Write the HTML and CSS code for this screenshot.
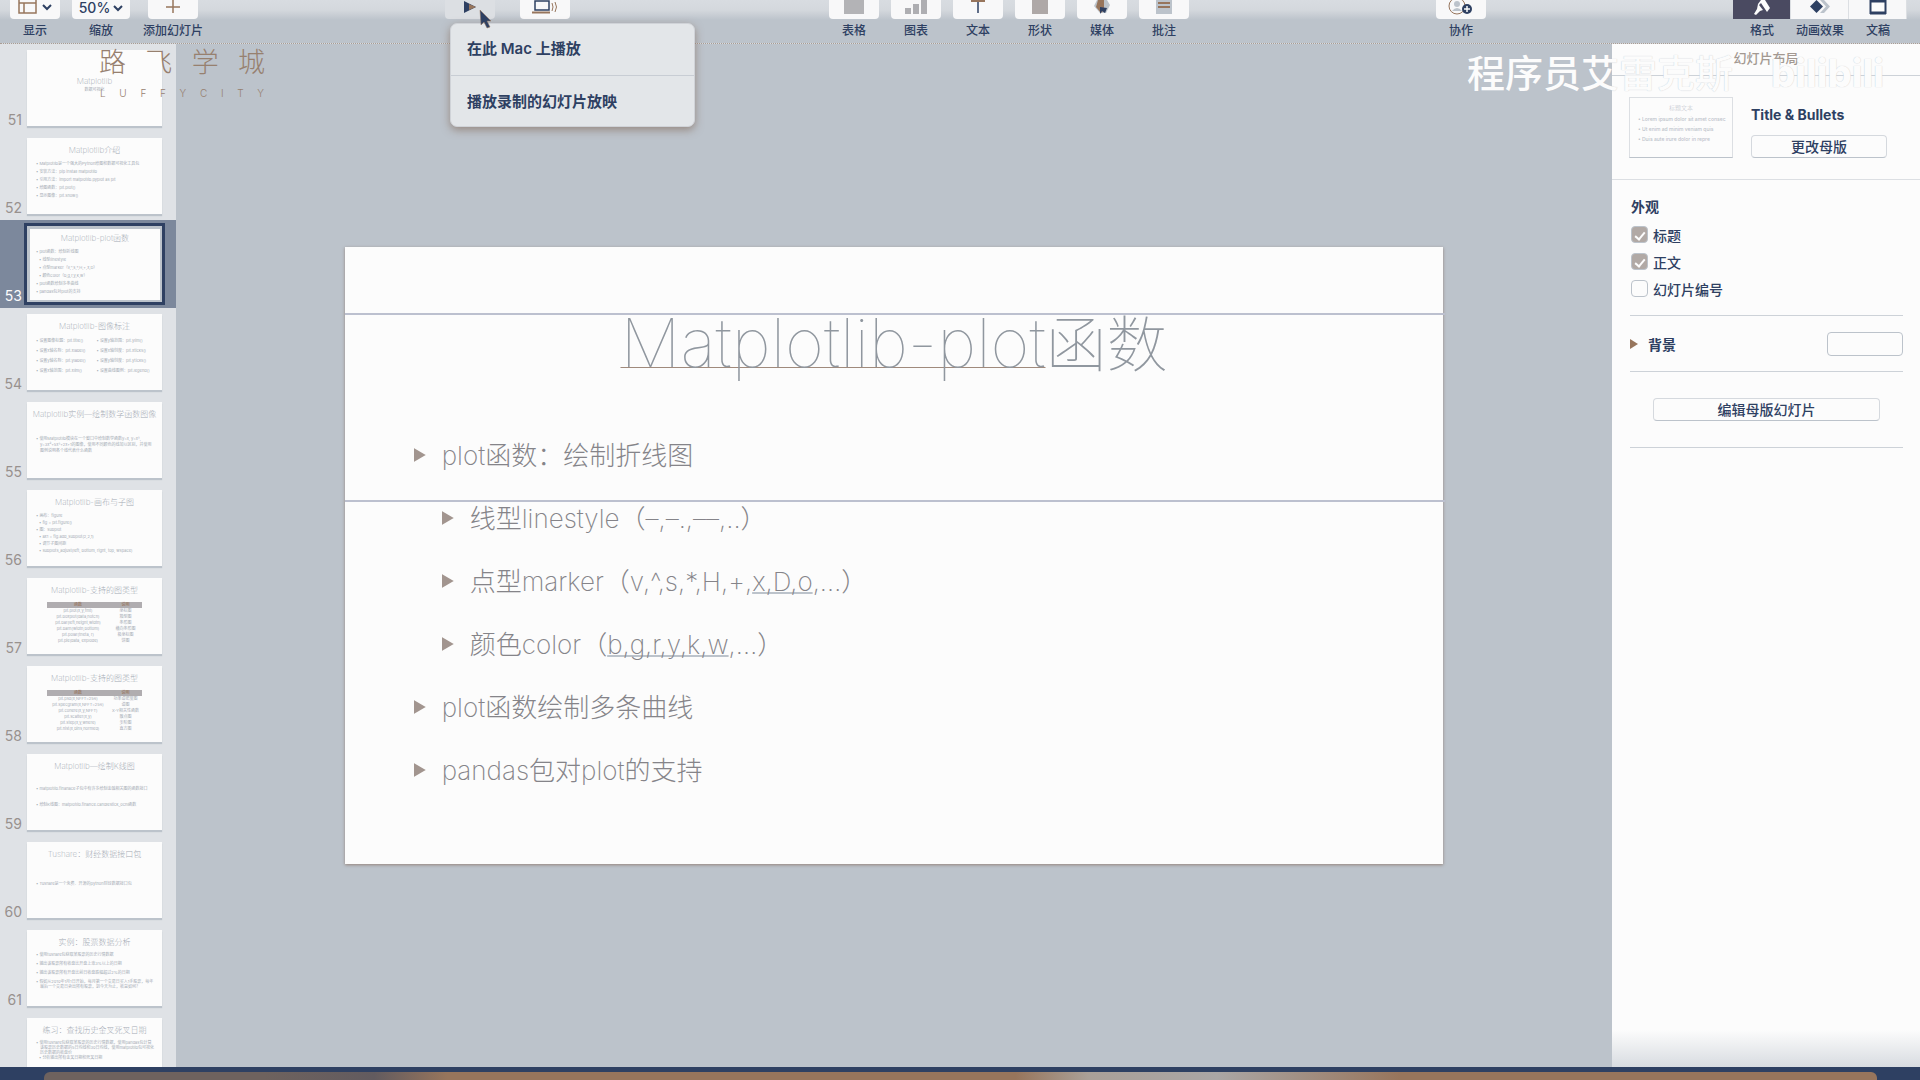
FILE: index.html
```html
<!DOCTYPE html>
<html lang="zh-CN">
<head>
<meta charset="utf-8">
<title>Matplotlib-plot函数</title>
<link rel="stylesheet" href="styles.css">
</head>
<body>
<div class="app">
  <header class="toolbar">
    <div class="group left">
      <div class="tool"><button aria-label="显示"><svg width="36" height="18" viewBox="0 0 36 18"><path d="M2 -2h17v15H2zM2 3h17M7 3v10" fill="none" stroke="#97755c" stroke-width="1.500"/><path d="M26 5l4 4 4-4" fill="none" stroke="#2e4062" stroke-width="2"/></svg></button><span>显示</span></div>
      <div class="tool wide"><button class="zoom">50%<svg width="10" height="8" viewBox="0 0 10 8"><path d="M1 2l4 4 4-4" fill="none" stroke="#2e4062" stroke-width="2"/></svg></button><span>缩放</span></div>
      <div class="tool"><button aria-label="添加幻灯片"><svg width="20" height="18" viewBox="0 0 20 18"><path d="M3 7h14M10 0v13" stroke="#97755c" stroke-width="1.500" fill="none"/></svg></button><span>添加幻灯片</span></div>
    </div>
    <div class="group play">
      <div class="tool"><button class="pressed" aria-label="播放"><svg width="20" height="18" viewBox="0 0 20 18"><path d="M4 1l12 6L4 13z" fill="#2e4062"/><path d="M9 4l7 3-7 3z" fill="#97755c"/></svg></button></div>
      <div class="tool"><button aria-label="Keynote Live"><svg width="28" height="18" viewBox="0 0 28 18"><rect x="4" y="1" width="14" height="9" fill="none" stroke="#2e4062" stroke-width="1.500"/><path d="M1 12.500h18" stroke="#97755c" stroke-width="2"/><path d="M21 3q2 4 0 8M24 2q3 5 0 10" fill="none" stroke="#97755c"/></svg></button></div>
    </div>
    <div class="group insert">
      <div class="tool"><button aria-label="表格"><svg width="22" height="18" viewBox="0 0 22 18"><path d="M1 0h20v14H1z" fill="#b3b3b6"/></svg></button><span>表格</span></div>
      <div class="tool"><button aria-label="图表"><svg width="24" height="18" viewBox="0 0 24 18"><path d="M1 8h6v6H1zM9 4h6v10H9zM17 0h6v14h-6z" fill="#aeaeb2"/></svg></button><span>图表</span></div>
      <div class="tool"><button aria-label="文本"><svg width="20" height="18" viewBox="0 0 20 18"><path d="M3 0h14v2H3z" fill="#97755c"/><path d="M10 2v11" stroke="#2e4062" stroke-width="1.500"/></svg></button><span>文本</span></div>
      <div class="tool"><button aria-label="形状"><svg width="20" height="18" viewBox="0 0 20 18"><path d="M2 0h16v14H2z" fill="#aea8a7"/></svg></button><span>形状</span></div>
      <div class="tool"><button aria-label="媒体"><svg width="20" height="18" viewBox="0 0 20 18"><path d="M5 0h10l3 5-4 8H8L2 6z" fill="#bcc3cb"/><path d="M6 0h6v10l-3 3-5-6z" fill="#97755c"/><path d="M8 7l7 1-2 5-3-2-2 3z" fill="#2e4062"/></svg></button><span>媒体</span></div>
      <div class="tool"><button aria-label="批注"><svg width="20" height="18" viewBox="0 0 20 18"><path d="M2 0h16v14H2z" fill="#bcc3cb"/><path d="M4 3h12M4 7h12" stroke="#97755c" stroke-width="2"/></svg></button><span>批注</span></div>
    </div>
    <div class="group">
      <div class="tool"><button aria-label="协作"><svg width="26" height="18" viewBox="0 0 26 18"><circle cx="9" cy="6" r="8" fill="none" stroke="#97755c"/><circle cx="9" cy="4" r="3" fill="#bcc3cb"/><path d="M4 11q5-6 10 0z" fill="#bcc3cb"/><circle cx="19" cy="9" r="5" fill="#2e4062"/><path d="M19 6v6M16 9h6" stroke="#fcfcfc" stroke-width="1.500"/></svg></button><span>协作</span></div>
    </div>
    <div class="group panes">
      <div class="tool"><button class="active" aria-label="格式"><svg width="22" height="18" viewBox="0 0 22 18"><path d="M10 0h4l5 8-3 4-6-9-2 2 4 5-3 1-4 4-2-1 3-5 1-5z" fill="#fcfcfc"/></svg></button><span>格式</span></div>
      <div class="tool"><button aria-label="动画效果"><svg width="24" height="18" viewBox="0 0 24 18"><path d="M12 0h4l6 6.500-6 6.500h-4l6-6.500z" fill="#bcc3cb"/><path d="M8.500 0l6.500 6.500L8.500 13 2 6.500z" fill="#2e4062"/></svg></button><span>动画效果</span></div>
      <div class="tool"><button aria-label="文稿"><svg width="20" height="18" viewBox="0 0 20 18"><path d="M2.500 0h15v13h-15z" fill="#fcfcfc" stroke="#2e4062" stroke-width="2"/><path d="M2 13h16M2 1h16" stroke="#2e4062" stroke-width="3"/></svg></button><span>文稿</span></div>
    </div>
  </header>

  <div class="menu">
    <button>在此 Mac 上播放</button>
    <hr>
    <button>播放录制的幻灯片放映</button>
  </div>
  <svg class="cursor" width="14" height="20" viewBox="0 0 14 20"><path d="M1 1l11 11H8l3 6-3 1-3-6-3 3z" fill="#2e4062" stroke="#97755c" stroke-width="0.500"/></svg>

  <main class="main">
    <nav class="navigator">
      <div class="item"><span class="num">51</span><div class="thumb cover"><h4>Matplotlib</h4><p>数据可视化</p></div></div>
      <div class="item"><span class="num">52</span><div class="thumb"><h4>Matplotlib介绍</h4><ul><li>Matplotlib是一个强大的Python绘图和数据可视化工具包</li><li>安装方法：pip install matplotlib</li><li>引用方法：import matplotlib.pyplot as plt</li><li>绘图函数：plt.plot()</li><li>显示图像：plt.show()</li></ul></div></div>
      <div class="item selected"><span class="num">53</span><div class="thumb"><h4>Matplotlib-plot函数</h4><ul><li>plot函数：绘制折线图</li><li class="sub">线型linestyle</li><li class="sub">点型marker（v,^,s,*,H,+,x,D）</li><li class="sub">颜色color（b,g,r,y,k,w）</li><li>plot函数绘制多条曲线</li><li>pandas包对plot的支持</li></ul></div></div>
      <div class="item"><span class="num">54</span><div class="thumb"><h4>Matplotlib-图像标注</h4><ul class="cols"><li>设置图像标题：plt.title()</li><li>设置x轴名称：plt.xlabel()</li><li>设置y轴名称：plt.ylabel()</li><li>设置x轴范围：plt.xlim()</li><li>设置y轴范围：plt.ylim()</li><li>设置x轴刻度：plt.xticks()</li><li>设置y轴刻度：plt.yticks()</li><li>设置曲线图例：plt.legend()</li></ul></div></div>
      <div class="item"><span class="num">55</span><div class="thumb low"><h4>Matplotlib实例—绘制数学函数图像</h4><ul class="para"><li>使用Matplotlib模块在一个窗口中绘制数学函数y=x, y=x², y=3x³+5x²+2x+1的图像，使用不同颜色的线加以区别，并使用图例说明各个线代表什么函数</li></ul></div></div>
      <div class="item"><span class="num">56</span><div class="thumb"><h4>Matplotlib-画布与子图</h4><ul class="mid"><li>画布：figure</li><li class="sub">fig = plt.figure()</li><li>图：subplot</li><li class="sub">ax1 = fig.add_subplot(2,2,1)</li><li class="sub">调节子图间距</li><li class="sub">subplots_adjust(left, bottom, right, top, wspace)</li></ul></div></div>
      <div class="item"><span class="num">57</span><div class="thumb"><h4>Matplotlib-支持的图类型</h4><table><tr><th>函数</th><th>说明</th></tr><tr><td>plt.plot(x,y,fmt)</td><td>坐标图</td></tr><tr><td>plt.boxplot(data,notch)</td><td>箱型图</td></tr><tr><td>plt.bar(left,height,width)</td><td>条形图</td></tr><tr><td>plt.barh(width,bottom)</td><td>横向条形图</td></tr><tr><td>plt.polar(theta, r)</td><td>极坐标图</td></tr><tr><td>plt.pie(data, explode)</td><td>饼图</td></tr></table></div></div>
      <div class="item"><span class="num">58</span><div class="thumb"><h4>Matplotlib-支持的图类型</h4><table><tr><th>函数</th><th>说明</th></tr><tr><td>plt.psd(x,NFFT=256)</td><td>功率谱密度图</td></tr><tr><td>plt.specgram(x,NFFT=256)</td><td>谱图</td></tr><tr><td>plt.cohere(x,y,NFFT)</td><td>X-Y相关性函数</td></tr><tr><td>plt.scatter(x,y)</td><td>散点图</td></tr><tr><td>plt.step(x,y,where)</td><td>步阶图</td></tr><tr><td>plt.hist(x,bins,normed)</td><td>直方图</td></tr></table></div></div>
      <div class="item"><span class="num">59</span><div class="thumb"><h4>Matplotlib—绘制K线图</h4><ul class="loose"><li>matplotlib.finanace子包中有许多绘制金融相关图的函数接口</li><li>绘制K线图：matplotlib.finance.candlestick_ochl函数</li></ul></div></div>
      <div class="item"><span class="num">60</span><div class="thumb"><h4>Tushare：财经数据接口包</h4><ul class="single"><li>Tushare是一个免费、开源的python财经数据接口包</li></ul></div></div>
      <div class="item"><span class="num">61</span><div class="thumb"><h4>实例：股票数据分析</h4><ul class="nine"><li>使用tushare包获取某股票的历史行情数据</li><li>输出该股票所有收盘比开盘上涨3%以上的日期</li><li>输出该股票所有开盘比前日收盘跌幅超过2%的日期</li><li>假如从2010年1月1日开始，每月第一个交易日买入1手股票，每年最后一个交易日卖出所有股票，到今天为止，收益如何？</li></ul></div></div>
      <div class="item"><span class="num"></span><div class="thumb"><h4>练习：查找历史金叉死叉日期</h4><ul class="tight"><li>使用tushare包获取某股票的历史行情数据，使用pandas包计算该股票历史数据的5日均线和30日均线，使用matplotlib包可视化历史数据的收盘价</li><li class="sub">分析输出所有金叉日期和死叉日期</li></ul></div></div>
    </nav>

    <section class="canvas">
      <article class="slide">
        <h1><u>Matplotlib-plot</u>函数</h1>
        <ul>
          <li>plot函数：绘制折线图</li>
          <li class="sub">线型linestyle（–,–.,––,..）</li>
          <li class="sub">点型marker（v,^,s,*,H,+,<u>x,D,o</u>,…）</li>
          <li class="sub">颜色color（<u>b,g,r,y,k,w</u>,…）</li>
          <li>plot函数绘制多条曲线</li>
          <li>pandas包对plot的支持</li>
        </ul>
        <i class="guide upper"></i>
        <i class="guide lower"></i>
      </article>
    </section>

    <aside class="inspector">
      <h2>幻灯片布局</h2>
      <div class="master">
        <div class="preview"><h5>标题文本</h5><p>• Lorem ipsum dolor sit amet consec</p><p>• Ut enim ad minim veniam quis</p><p>• Duis aute irure dolor in repre</p></div>
        <div class="master-info"><strong>Title &amp; Bullets</strong><button>更改母版</button></div>
      </div>
      <div class="options">
        <h3>外观</h3>
        <label><input type="checkbox" checked>标题</label>
        <label><input type="checkbox" checked>正文</label>
        <label><input type="checkbox">幻灯片编号</label>
      </div>
      <div class="background"><svg width="8" height="10" viewBox="0 0 8 10"><path d="M0 0l8 5-8 5z" fill="#97755c"/></svg><span>背景</span><button class="well" aria-label="背景颜色"></button></div>
      <div class="edit"><button>编辑母版幻灯片</button></div>
      <div class="fade"></div>
    </aside>
  </main>
  <footer class="dock"><div></div></footer>

  <div class="brand">
    <div class="cn"><span>路</span><span>飞</span><span>学</span><span>城</span></div>
    <div class="en"><span>L</span><span>U</span><span>F</span><span>F</span><span>Y</span><span>C</span><span>I</span><span>T</span><span>Y</span></div>
  </div>
  <div class="author"><span>程序员艾雷克斯</span><b>bilibili</b></div>
</div>
</body>
</html>
```
FILE: styles.css
```css
* { box-sizing: border-box; margin: 0; padding: 0; }
body { font-family: Inter, "Noto Sans CJK SC", sans-serif; color: #2e4062; background: #bcc3cb; }
button { font: inherit; color: inherit; border: 0; background: none; }
ul { list-style: none; }
.app { position: relative; display: flex; flex-direction: column; height: 100vh; overflow: hidden; }

/* toolbar */
.toolbar { display: flex; justify-content: space-between; flex: none; height: 44px; padding: 0 13px 0 10px; background: linear-gradient(#d8dce1, #d4d8dd 10px, #bcc3cb 20px); border-bottom: 1px dotted #a99c93; }
.group { display: flex; gap: 12px; }
.play { gap: 25px; }
.insert { gap: 12px; margin-left: 12px; }
.tool { display: flex; flex-direction: column; align-items: center; gap: 3px; width: 50px; font-size: 12px; line-height: 18px; font-weight: 500; white-space: nowrap; }
.tool.wide { width: 58px; margin-right: 6px; }
.tool > span { flex: none; }
.tool button { display: flex; justify-content: center; align-items: flex-start; width: 100%; height: 19px; background: #f8f8f9; border-radius: 0 0 4px 4px; }
.tool .pressed { background: #dcdfe3; }
.tool .zoom { align-items: center; gap: 3px; padding-bottom: 4px; font-size: 14px; line-height: 14px; }
.panes { gap: 0; }
.panes .tool { width: 58px; }
.panes button { border-radius: 0; border-right: 1px solid #dcdfe3; }
.panes .active { background: #4a4a61; }

/* play menu */
.menu { position: absolute; z-index: 3; left: 450px; top: 23px; width: 245px; padding: 7px 0 6px; border-radius: 7px; background: #e3e6e9; border: 1px solid #d0d3d8; box-shadow: 0 3px 8px rgba(120, 90, 70, .55); }
.menu button { display: block; width: 100%; padding: 0 16px; text-align: left; font-size: 15px; line-height: 36px; font-weight: 600; }
.menu hr { border: 0; height: 1px; margin: 8px 0; background: #c8cdd4; }
.cursor { position: absolute; z-index: 4; left: 479px; top: 9px; }

.main { display: flex; flex: 1; min-height: 0; }

/* slide navigator */
.navigator { flex: none; width: 176px; overflow: hidden; background: #dfe2e6; }
.item { display: flex; align-items: flex-end; height: 88px; padding: 6px 14px 6px 0; }
.num { width: 27px; padding-right: 5px; text-align: right; font-size: 14px; line-height: 12px; color: #98918e; }
.thumb { width: 135px; height: 76px; overflow: hidden; padding: 5px 8px; background: #fcfcfc; box-shadow: 0 2px 1px #bcc3cb; color: #a4abb4; }
.thumb h4 { margin: 0 -8px 3px; text-align: center; font-size: 8px; line-height: 14px; font-weight: 200; white-space: nowrap; }
.thumb li { padding-left: 5px; font-size: 4px; line-height: 8px; text-indent: -4px; }
.thumb li::before { content: "• "; }
.thumb .sub { padding-left: 8px; }
.thumb .cols { columns: 2; column-gap: 2px; white-space: nowrap; }
.thumb .cols li { line-height: 10px; }
.thumb .tight li { line-height: 5px; }
.thumb .para { padding-top: 12px; }
.thumb .para li { line-height: 6px; }
.thumb .mid li { line-height: 7px; }
.thumb .loose { padding-top: 5px; }
.thumb .loose li { line-height: 16px; white-space: nowrap; }
.thumb .single { padding-top: 16px; }
.thumb .nine li { line-height: 5px; padding-bottom: 4px; }
.cover { text-align: center; padding-top: 26px; }
.cover h4 { margin-bottom: 0; line-height: 10px; }
.cover p { font-size: 4px; line-height: 8px; }
.thumb table { width: 95px; margin: 5px auto 0; border-collapse: collapse; text-align: center; font-size: 4px; line-height: 6px; white-space: nowrap; }
.thumb th { background: #b0adb0; color: #97755c; font-weight: 500; }
.thumb th:first-child { width: 62px; }
.selected { background: #7c889c; }
.selected .num { color: #fcfcfc; }
.selected .thumb { outline: 3px solid #2e4062; border: solid #bcc3cb; border-width: 3px 2px 2px 3px; padding: 2px 5px; box-shadow: none; }

/* slide */
.canvas { display: flex; flex: 1; align-items: center; justify-content: center; min-width: 0; }
.slide { position: relative; width: 76.5%; aspect-ratio: 16 / 9; padding-top: 48px; background: #fcfcfc; box-shadow: 0 1px 3px rgba(120, 90, 70, .6); color: #858489; font-feature-settings: "calt" 0; }
.slide h1 { height: 129px; text-align: center; font-size: 61px; line-height: 96px; font-weight: 100; color: #90979f; }
.slide h1 u { font-size: 67px; text-decoration: underline; text-decoration-color: #a08a7c; text-decoration-thickness: 1px; text-underline-offset: 0; text-decoration-skip-ink: none; }
.slide li { display: flex; align-items: center; padding-left: 69px; font-size: 26px; line-height: 63px; font-weight: 200; white-space: pre; }
.slide li::before { content: ""; width: 12px; height: 14px; margin-right: 16px; background: #a2958f; clip-path: polygon(0 0, 100% 50%, 0 100%); }
.slide .sub { padding-left: 97px; }
.slide li u { text-decoration-color: #bcc3cb; text-decoration-thickness: 2px; text-underline-offset: 1px; text-decoration-skip-ink: none; }
.guide { position: absolute; left: 0; right: -2px; height: 2px; background: #bcc0cf; }
.upper { top: 66px; }
.lower { top: 253px; }

/* inspector */
.inspector { display: flex; flex-direction: column; flex: none; width: 308px; background: #fcfcfc; font-size: 14px; font-weight: 500; }
.inspector h2 { height: 32px; text-align: center; font-size: 13px; line-height: 28px; font-weight: 500; color: #a39992; border-bottom: 1px solid #cdd2d8; }
.master { display: flex; gap: 18px; height: 104px; padding: 21px 17px; border-bottom: 1px solid #dcdfe3; }
.preview { width: 104px; height: 61px; padding: 4px 8px; border: 1px solid #dcdfe3; border-bottom-color: #bcc3cb; color: #bcc3cb; font-size: 5px; line-height: 10px; white-space: nowrap; overflow: hidden; }
.preview h5 { text-align: center; font-size: 6px; line-height: 12px; font-weight: 300; }
.master-info { display: flex; flex-direction: column; gap: 10px; padding-top: 8px; width: 136px; }
.master-info strong { font-size: 14px; line-height: 20px; font-weight: 700; }
.master-info button, .edit button { width: 100%; border: 1px solid #d5d9de; border-bottom-color: #bcc3cb; border-radius: 4px; line-height: 21px; }
.options { display: flex; flex-direction: column; margin: 0 17px 0 18px; padding: 13px 0 13px 1px; border-bottom: 1px solid #cdd2d8; }
.options h3 { font-size: 14px; line-height: 28px; font-weight: 600; }
.options label { display: flex; align-items: center; gap: 5px; height: 27px; }
.options input { appearance: none; display: grid; place-items: center; width: 17px; height: 17px; border: 1px solid #bcc3cb; border-radius: 4px; }
.options input:checked { background: #b1a9a5; }
.options input:checked::after { content: ""; width: 4px; height: 8px; border: solid #fcfcfc; border-width: 0 2px 2px 0; transform: rotate(40deg); }
.background { display: flex; align-items: center; gap: 10px; height: 56px; margin: 0 17px 0 18px; border-bottom: 1px solid #cdd2d8; font-weight: 600; }
.well { width: 76px; height: 24px; margin-left: auto; border: 1px solid #bcc3cb; border-radius: 4px; }
.edit { height: 76px; margin: 0 17px 0 18px; padding: 26px 23px; border-bottom: 1px solid #cdd2d8; }
.fade { height: 37px; margin-top: auto; background: linear-gradient(#fcfcfc, #d8dce1); }

/* strip under the window */
.dock { flex: none; height: 13px; padding: 5px 43px 0 44px; background: #2e4062; }
.dock div { height: 8px; border-radius: 6px 6px 0 0; background: linear-gradient(90deg, #6e625e 0, #6e625e 12%, #625b5f 18%, #97755c 22%, #97755c 53%, #aaa098 57%, #aaa6a5 64%, #97755c 74%); }

/* overlaid marks */
.brand { position: absolute; z-index: 2; left: 99px; top: 47px; width: 166px; color: #97806f; }
.brand div { display: flex; justify-content: space-between; }
.cn { font-size: 27px; line-height: 32px; font-weight: 200; }
.en { padding: 8px 1px 0; font-size: 10px; line-height: 12px; font-weight: 300; }
.author { position: absolute; z-index: 2; right: 36px; top: 44px; display: flex; align-items: center; gap: 38px; color: #fcfcfc; text-shadow: 0 0 1px #bcc3cb; white-space: nowrap; }
.author span { font-size: 38px; line-height: 58px; font-weight: 500; }
.author b { font-size: 38px; line-height: 40px; font-weight: 800; }
```
